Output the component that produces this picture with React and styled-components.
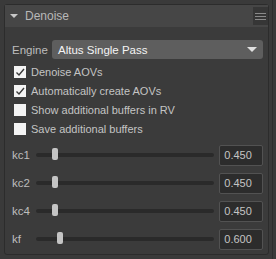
import React from 'react';
import styled, { createGlobalStyle } from 'styled-components';

const Global = createGlobalStyle`
  html, body {
    margin: 0;
    background: #3a3a3a;
    font-family: "Liberation Sans", Arial, sans-serif;
    font-size: 11px;
  }
`;

const checks = [
  { label: 'Denoise AOVs', on: true },
  { label: 'Automatically create AOVs', on: true },
  { label: 'Show additional buffers in RV', on: false },
  { label: 'Save additional buffers', on: false },
];

const sliders = [
  { label: 'kc1', value: 0.45 },
  { label: 'kc2', value: 0.45 },
  { label: 'kc4', value: 0.45 },
  { label: 'kf', value: 0.6 },
];

const App = () => {
  return (
    <Page>
      <Global />
      <Panel>
        <Header>
          <Arrow />
          <Title>Denoise</Title>
          <MenuButton>
            <span />
            <span />
            <span />
          </MenuButton>
        </Header>
        <Body>
          <EngineRow>
            <Label>Engine</Label>
            <Select>
              Altus Single Pass
              <SelectArrow />
            </Select>
          </EngineRow>
          <Checks>
            {checks.map((c) => (
              <CheckRow key={c.label}>
                <Box>
                  {c.on && (
                    <svg width='12' height='12' viewBox='0 0 12 12'>
                      <path d='M2.5 6.5 L5 9 L10 3' fill='none' stroke='#3a3a3a' strokeWidth='1.4' />
                    </svg>
                  )}
                </Box>
                <CheckLabel>{c.label}</CheckLabel>
              </CheckRow>
            ))}
          </Checks>
          <Sliders>
            {sliders.map((s) => (
              <SliderRow key={s.label}>
                <SliderLabel>{s.label}</SliderLabel>
                <Track>
                  <Handle style={{ left: `${s.value * 34 + 0.7}px` }} />
                </Track>
                <Value>{s.value.toFixed(3)}</Value>
              </SliderRow>
            ))}
          </Sliders>
        </Body>
      </Panel>
      <Scroll />
    </Page>
  );
};

export default App;

const Page = styled.div`
  display: flex;
  width: 276px;
  height: 259px;
  overflow: hidden;
`;

const Panel = styled.div`
  margin: 4px 0 0 4px;
  width: 263px;
  height: 249px;
  border: 1px solid #2c2c2c;
  border-radius: 3px;
  background: #3b3b3b;
  display: flex;
  flex-direction: column;
`;

const Scroll = styled.div`
  margin-left: 3px;
  width: 1px;
  height: 259px;
  background: #2e2e2e;
`;

const Header = styled.div`
  height: 22px;
  display: flex;
  align-items: center;
  background: #464646;
  padding-left: 5px;
`;

const Arrow = styled.div`
  width: 0;
  height: 0;
  border-left: 4px solid transparent;
  border-right: 4px solid transparent;
  border-top: 4px solid #c8c8c8;
  margin-right: 7px;
`;

const Title = styled.div`
  color: #b8b8b8;
  font-size: 12px;
  flex: 1;
`;

const MenuButton = styled.div`
  width: 15px;
  height: 18px;
  background: #363636;
  display: flex;
  flex-direction: column;
  justify-content: center;
  align-items: center;
  gap: 2px;
  span {
    display: block;
    width: 11px;
    height: 1px;
    background: #8a8a8a;
  }
`;

const Body = styled.div`
  padding: 13px 5px 0 7px;
  display: flex;
  flex-direction: column;
`;

const EngineRow = styled.div`
  display: flex;
  align-items: center;
  height: 19px;
`;

const Label = styled.div`
  color: #bdbdbd;
  width: 40px;
  font-size: 11.5px;
`;

const Select = styled.div`
  flex: 1;
  height: 19px;
  border-radius: 3px;
  background: #5e5e5e;
  color: #f4f4f4;
  font-size: 11.5px;
  display: flex;
  align-items: center;
  padding: 0 6px;
  justify-content: space-between;
`;

const SelectArrow = styled.div`
  width: 0;
  height: 0;
  border-left: 5px solid transparent;
  border-right: 5px solid transparent;
  border-top: 5px solid #e0e0e0;
`;

const Checks = styled.div`
  margin-top: 6px;
  display: flex;
  flex-direction: column;
  gap: 6px;
`;

const CheckRow = styled.div`
  display: flex;
  align-items: center;
  height: 13px;
  padding-left: 2px;
`;

const Box = styled.div`
  width: 12px;
  height: 12px;
  background: #f4f4f4;
  margin-right: 5px;
  display: flex;
`;

const CheckLabel = styled.div`
  color: #c4c4c4;
  font-size: 11px;
`;

const Sliders = styled.div`
  margin-top: 10px;
  display: flex;
  flex-direction: column;
  gap: 8px;
`;

const SliderRow = styled.div`
  display: flex;
  align-items: center;
  height: 20px;
`;

const SliderLabel = styled.div`
  color: #bdbdbd;
  width: 24px;
  font-size: 11.5px;
`;

const Track = styled.div`
  position: relative;
  width: 180px;
  height: 4px;
  border-radius: 2px;
  background: #2a2a2a;
  margin-right: 5px;
`;

const Handle = styled.div`
  position: absolute;
  top: -5px;
  width: 6px;
  height: 12px;
  border-radius: 2px;
  background: #c4c4c4;
`;

const Value = styled.div`
  width: 38px;
  height: 19px;
  border: 1px solid #525252;
  border-radius: 2px;
  background: #2c2c2c;
  color: #c4c4c4;
  display: flex;
  align-items: center;
  padding-left: 4px;
  font-size: 11px;
`;
